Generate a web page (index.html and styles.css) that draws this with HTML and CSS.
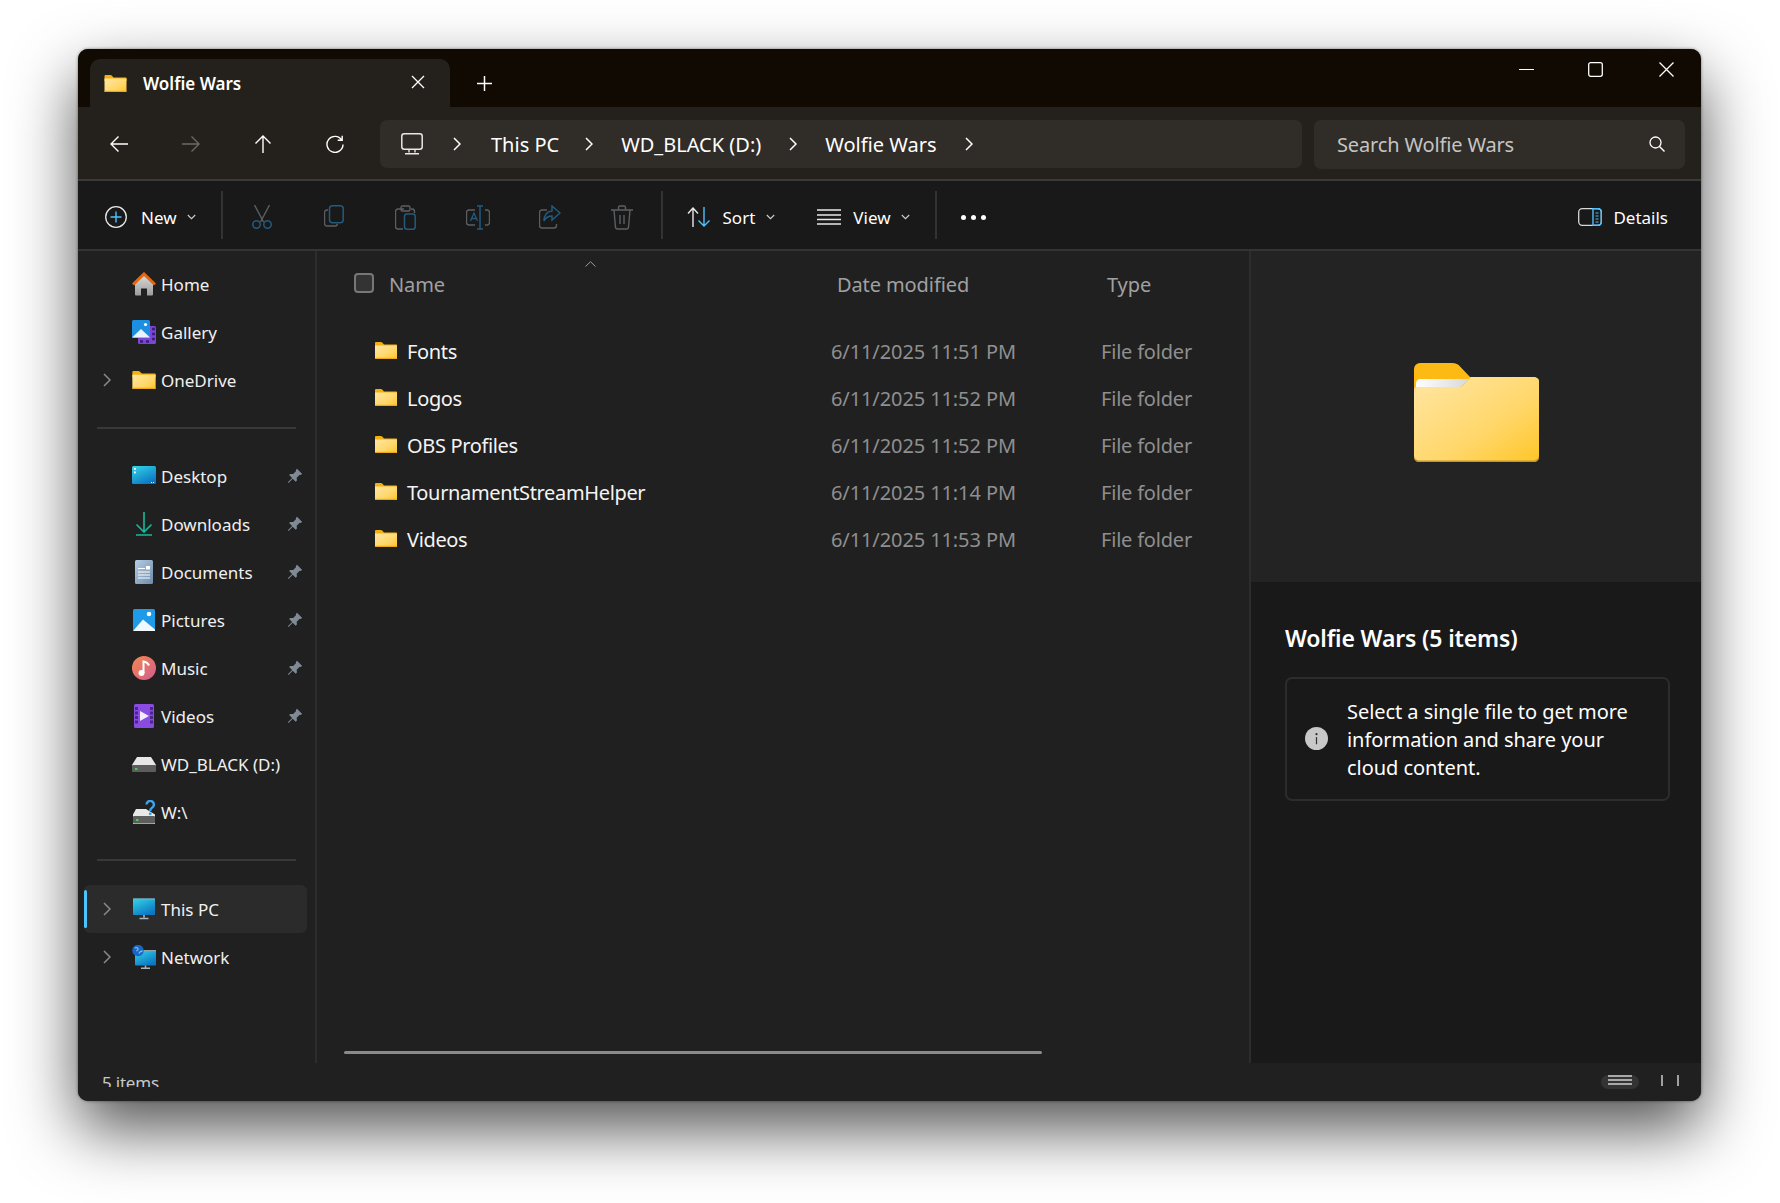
FILE: index.html
```html
<!DOCTYPE html>
<html lang="en">
<head>
    <meta charset="UTF-8">
    <title>Wolfie Wars - File Explorer</title>
    <link rel="stylesheet" href="styles.css">
</head>
<body>

    <!-- Shared icons -->
    <svg class="defs" width="0" height="0">
        <defs>
            <linearGradient id="folderFront" x1="0" y1="0" x2="1" y2="1">
                <stop offset="0" stop-color="#ffe6a3"/>
                <stop offset="0.6" stop-color="#ffd76a"/>
                <stop offset="1" stop-color="#ffc629"/>
            </linearGradient>
            <linearGradient id="paper" x1="0" y1="0" x2="1" y2="0">
                <stop offset="0" stop-color="#ffffff"/>
                <stop offset="1" stop-color="#d8d8d8"/>
            </linearGradient>
            <linearGradient id="screenBlue" x1="0" y1="0" x2="0.6" y2="1">
                <stop offset="0" stop-color="#35d6e8"/>
                <stop offset="1" stop-color="#0c78c4"/>
            </linearGradient>
            <linearGradient id="musicGrad" x1="0" y1="0" x2="1" y2="1">
                <stop offset="0" stop-color="#f5884a"/>
                <stop offset="1" stop-color="#d05c94"/>
            </linearGradient>
            <linearGradient id="docGrad" x1="0" y1="0" x2="1" y2="1">
                <stop offset="0" stop-color="#b4cde6"/>
                <stop offset="1" stop-color="#6f8ba8"/>
            </linearGradient>
            <linearGradient id="houseGrad" x1="0" y1="0" x2="0" y2="1">
                <stop offset="0" stop-color="#d8d8d8"/>
                <stop offset="1" stop-color="#9c9c9c"/>
            </linearGradient>
            <symbol id="folder" viewBox="0 0 22 17">
                <path d="M0 1.2C0 .5.5 0 1.2 0h4.6c.6 0 1 .2 1.4.6L9 2.4h12c.6 0 1 .4 1 1V6H0z" fill="#f5b00f"/>
                <path d="M0 3.6h22v12.6c0 .5-.3.8-.8.8H.8c-.5 0-.8-.3-.8-.8z" fill="url(#folderFront)"/>
                <rect x="0" y="15.8" width="22" height="1.2" fill="#eca91b"/>
            </symbol>
            <symbol id="pin" viewBox="0 0 16 16">
                <path d="M10 .8l5.2 5.2-1.5 1-1-.3-3 3 .2 2.8-1.2 1.2-3-3L1.6 15 .9 14.3l4.2-4.2-3-3 1.2-1.2 2.8.2 3-3-.3-1z" fill="#7f8a94"/>
            </symbol>
            <symbol id="chev" viewBox="0 0 8 14">
                <path d="M1 1l6 6-6 6" fill="none" stroke="currentColor" stroke-width="1.5"/>
            </symbol>
            <symbol id="drop" viewBox="0 0 9 6">
                <path d="M.8 1l3.7 3.7L8.2 1" fill="none" stroke="currentColor" stroke-width="1.1"/>
            </symbol>
            <symbol id="drive" viewBox="0 0 24 16">
                <path d="M5 1h14l5 8v6H0V9z" fill="#e8e8e8"/>
                <rect x="0" y="9" width="24" height="7" rx="1" fill="#5d5d5d"/>
                <rect x="3" y="12" width="2.4" height="2" fill="#3fd54a"/>
            </symbol>
        </defs>
    </svg>

    <div class="window">

        <!-- Title bar with tab -->
        <div class="titlebar">
            <div class="tab">
                <svg class="tab-folder"><use href="#folder"/></svg>
                <span class="tab-title">Wolfie Wars</span>
                <svg class="tab-close" viewBox="0 0 14 14"><path d="M1 1l12 12M13 1L1 13" stroke="#fff" stroke-width="1.3"/></svg>
            </div>
            <svg class="tab-new" viewBox="0 0 15 15"><path d="M7.5 0v15M0 7.5h15" stroke="#fff" stroke-width="1.5"/></svg>
            <div class="win-controls">
                <svg class="win-min" viewBox="0 0 15 15"><path d="M0 7.5h15" stroke="#fff" stroke-width="1.2"/></svg>
                <svg class="win-max" viewBox="0 0 15 15"><rect x=".7" y=".7" width="13.6" height="13.6" rx="2" fill="none" stroke="#fff" stroke-width="1.3"/></svg>
                <svg class="win-close" viewBox="0 0 15 15"><path d="M.5.5l14 14M14.5.5l-14 14" stroke="#fff" stroke-width="1.3"/></svg>
            </div>
        </div>

        <!-- Address row -->
        <div class="navrow">
            <div class="nav-btn"><svg viewBox="0 0 18 18"><path d="M18 9H1M8.5 1.5L1 9l7.5 7.5" fill="none" stroke="#fff" stroke-width="1.4"/></svg></div>
            <div class="nav-btn"><svg viewBox="0 0 18 18"><path d="M0 9h17M9.5 1.5L17 9l-7.5 7.5" fill="none" stroke="#6b6966" stroke-width="1.4"/></svg></div>
            <div class="nav-btn"><svg viewBox="0 0 18 18"><path d="M9 18V1M1.5 8.5L9 1l7.5 7.5" fill="none" stroke="#fff" stroke-width="1.4"/></svg></div>
            <div class="nav-btn"><svg viewBox="0 0 18 18"><path d="M15.7 5A8 8 0 1 0 17 9.5M16.2 .8V5.3H11.7" fill="none" stroke="#fff" stroke-width="1.4"/></svg></div>
            <div class="addressbar">
                <svg class="addr-pc" viewBox="0 0 22 22"><rect x=".8" y=".8" width="20.4" height="15.4" rx="2.5" fill="none" stroke="#e8e8e8" stroke-width="1.5"/><path d="M8 16.5v3M14 16.5v3M4 20.7h14" stroke="#e8e8e8" stroke-width="1.4" fill="none"/></svg>
                <svg class="crumb-chev first"><use href="#chev"/></svg>
                <span class="crumb crumb-pc">This PC</span>
                <svg class="crumb-chev"><use href="#chev"/></svg>
                <span class="crumb crumb-wd">WD_BLACK (D:)</span>
                <svg class="crumb-chev"><use href="#chev"/></svg>
                <span class="crumb crumb-ww">Wolfie Wars</span>
                <svg class="crumb-chev"><use href="#chev"/></svg>
            </div>
            <div class="searchbox">
                <span>Search Wolfie Wars</span>
                <svg viewBox="0 0 16 16"><circle cx="6.5" cy="6.5" r="5.5" fill="none" stroke="#fff" stroke-width="1.3"/><path d="M10.5 10.5L15.5 15.5" stroke="#fff" stroke-width="1.4"/></svg>
            </div>
        </div>

        <!-- Command bar -->
        <div class="toolbar">
            <div class="tool-new">
                <svg class="ic-new" viewBox="0 0 22 22"><circle cx="11" cy="11" r="10.3" fill="none" stroke="#e8e8e8" stroke-width="1.3"/><path d="M11 5.5v11M5.5 11h11" stroke="#4cc2ff" stroke-width="1.4"/></svg>
                <span class="tool-label">New</span>
                <svg class="tool-drop"><use href="#drop"/></svg>
            </div>
            <div class="tool-sep sep-a"></div>
            <div class="tool-icons">
                <div class="tool-icon"><svg width="20" height="24" viewBox="0 0 20 24"><path d="M2.5 0l9 17M17.5 0l-9 17" stroke="#5c5f62" stroke-width="1.4"/><circle cx="4.5" cy="19.5" r="3.7" fill="none" stroke="#245a7d" stroke-width="1.5"/><circle cx="15.5" cy="19.5" r="3.7" fill="none" stroke="#245a7d" stroke-width="1.5"/></svg></div>
                <div class="tool-icon"><svg width="20" height="22" viewBox="0 0 20 22"><path d="M4 5H3a2.5 2.5 0 0 0-2.5 2.5v11A2.5 2.5 0 0 0 3 21h8a2.5 2.5 0 0 0 2.5-2" fill="none" stroke="#5c5f62" stroke-width="1.4"/><rect x="5.5" y=".8" width="13.7" height="17" rx="3" fill="none" stroke="#245a7d" stroke-width="1.5"/></svg></div>
                <div class="tool-icon"><svg width="21" height="25" viewBox="0 0 21 25"><path d="M9 4H3a2.5 2.5 0 0 0-2.5 2.5v15A2.5 2.5 0 0 0 3 24h5M16 4h1a2.5 2.5 0 0 1 2.5 2.5V8" fill="none" stroke="#5c5f62" stroke-width="1.4"/><rect x="6" y="1" width="9" height="5" rx="1.5" fill="none" stroke="#5c5f62" stroke-width="1.4"/><rect x="9.5" y="9" width="10.7" height="15.2" rx="2.5" fill="none" stroke="#245a7d" stroke-width="1.5"/></svg></div>
                <div class="tool-icon"><svg width="24" height="25" viewBox="0 0 24 25"><path d="M9 5H3a2.5 2.5 0 0 0-2.5 2.5v10A2.5 2.5 0 0 0 3 20h6M19 5h2a2.5 2.5 0 0 1 2.5 2.5v10A2.5 2.5 0 0 1 21 20h-2" fill="none" stroke="#5c5f62" stroke-width="1.4"/><path d="M14 1v23M11 1h6M11 24h6" stroke="#245a7d" stroke-width="1.5"/><path d="M4.5 16l3.5-8 3.5 8M5.8 13.5h4.5" fill="none" stroke="#245a7d" stroke-width="1.3"/></svg></div>
                <div class="tool-icon"><svg width="22" height="24" viewBox="0 0 22 24"><path d="M8 5H3a2.5 2.5 0 0 0-2.5 2.5v13A2.5 2.5 0 0 0 3 23h12a2.5 2.5 0 0 0 2.5-2.5V19" fill="none" stroke="#5c5f62" stroke-width="1.4"/><path d="M13 1l8 7-8 7v-4c-4 0-6 1-8 5 0-6 3-9.5 8-10z" fill="none" stroke="#245a7d" stroke-width="1.5"/></svg></div>
                <div class="tool-icon"><svg width="22" height="25" viewBox="0 0 22 25"><path d="M0 5h22M7.5 5V2.5A1.5 1.5 0 0 1 9 1h4a1.5 1.5 0 0 1 1.5 1.5V5M3 5l1.5 17.5A2 2 0 0 0 6.5 24h9a2 2 0 0 0 2-1.5L19 5M9 10v9M13 10v9" fill="none" stroke="#5c5f62" stroke-width="1.4"/></svg></div>
            </div>
            <div class="tool-sep sep-b"></div>
            <div class="tool-sort">
                <svg class="ic-sort" viewBox="0 0 24 20"><path d="M6 20V1M1 6.5L6 1l5 5.5" fill="none" stroke="#e8e8e8" stroke-width="1.4"/><path d="M17 0v19M11.5 13.5L17 19l5.5-5.5" fill="none" stroke="#4cc2ff" stroke-width="1.4"/></svg>
                <span class="tool-label">Sort</span>
                <svg class="tool-drop"><use href="#drop"/></svg>
            </div>
            <div class="tool-view">
                <svg class="ic-view" viewBox="0 0 24 16"><path d="M0 1h24M0 6h24M0 10.5h24M0 15h24" stroke="#e8e8e8" stroke-width="1.3"/></svg>
                <span class="tool-label">View</span>
                <svg class="tool-drop"><use href="#drop"/></svg>
            </div>
            <div class="tool-sep sep-c"></div>
            <div class="tool-more"><i></i><i></i><i></i></div>
            <div class="tool-details">
                <svg class="ic-details" viewBox="0 0 24 18"><rect x=".7" y=".7" width="22.6" height="16.6" rx="3.5" fill="none" stroke="#d8d8d8" stroke-width="1.3"/><path d="M15 .7h5a3.3 3.3 0 0 1 3.3 3.3v10a3.3 3.3 0 0 1-3.3 3.3h-5z" fill="none" stroke="#4cc2ff" stroke-width="1.4"/><path d="M17.5 5h3M17.5 8h3M17.5 11h3M17.5 14h3" stroke="#4cc2ff" stroke-width="1"/></svg>
                <span class="tool-label">Details</span>
            </div>
        </div>

        <div class="content">

            <!-- Navigation pane -->
            <div class="sidebar">
                <div class="side-row">
                    <span class="side-chev"></span>
                    <svg class="side-icon" viewBox="0 0 24 24"><path d="M3 12L12 3.5 21 12v10.5a1 1 0 0 1-1 1h-5v-7H9v7H4a1 1 0 0 1-1-1z" fill="url(#houseGrad)"/><path d="M1 12.5L12 2l11 10.5" fill="none" stroke="#e8660c" stroke-width="3"/></svg>
                    <span>Home</span>
                </div>
                <div class="side-row">
                    <span class="side-chev"></span>
                    <svg class="side-icon" viewBox="0 0 24 24"><rect x="6" y="6" width="18" height="18" rx="1.5" fill="#7c45d6"/><path d="M20 9h3M20 14h3M20 19h3M8 21.5h3M14 21.5h3" stroke="#3a1f78" stroke-width="2.4"/><rect x="0" y="0" width="18" height="18" rx="1.5" fill="#1d8fe0"/><path d="M0 17.5L9 9l9 8.5z" fill="#e8f4ff"/><circle cx="13.5" cy="4.5" r="1.6" fill="#fff"/></svg>
                    <span>Gallery</span>
                </div>
                <div class="side-row">
                    <svg class="side-chev"><use href="#chev"/></svg>
                    <svg class="side-icon side-folder"><use href="#folder"/></svg>
                    <span>OneDrive</span>
                </div>

                <div class="side-sep"></div>

                <div class="side-row">
                    <span class="side-chev"></span>
                    <svg class="side-icon" viewBox="0 0 24 24"><rect x="0" y="2" width="24" height="18" rx="1.5" fill="url(#screenBlue)"/><rect x="2" y="4" width="1.8" height="1.8" fill="#fff"/><rect x="2" y="7.5" width="1.8" height="1.8" fill="#fff"/><rect x="19" y="18" width="1" height="1" fill="#fff"/><rect x="21" y="18" width="1" height="1" fill="#fff"/></svg>
                    <span>Desktop</span>
                    <svg class="side-pin"><use href="#pin"/></svg>
                </div>
                <div class="side-row">
                    <span class="side-chev"></span>
                    <svg class="side-icon" viewBox="0 0 24 24"><path d="M12 0v20M4.5 12.5L12 20l7.5-7.5M4 23h16" fill="none" stroke="#18b99a" stroke-width="1.6"/></svg>
                    <span>Downloads</span>
                    <svg class="side-pin"><use href="#pin"/></svg>
                </div>
                <div class="side-row">
                    <span class="side-chev"></span>
                    <svg class="side-icon" viewBox="0 0 24 24"><rect x="3" y="0" width="18" height="24" rx="1.5" fill="url(#docGrad)"/><path d="M6 8.5h7M6 12h12M6 15h12M6 18h12" stroke="#fff" stroke-width="1.2"/><rect x="14" y="6" width="4" height="3.5" fill="#fff"/></svg>
                    <span>Documents</span>
                    <svg class="side-pin"><use href="#pin"/></svg>
                </div>
                <div class="side-row">
                    <span class="side-chev"></span>
                    <svg class="side-icon" viewBox="0 0 24 24"><rect x="1" y="1" width="22" height="22" rx="1.5" fill="#1d9ae8"/><path d="M1 23L11 11.5 23 21.5V23z" fill="#f2f8ff"/><circle cx="17" cy="6" r="2.3" fill="#fff"/></svg>
                    <span>Pictures</span>
                    <svg class="side-pin"><use href="#pin"/></svg>
                </div>
                <div class="side-row">
                    <span class="side-chev"></span>
                    <svg class="side-icon" viewBox="0 0 24 24"><circle cx="12" cy="12" r="12" fill="url(#musicGrad)"/><circle cx="9.5" cy="17" r="3" fill="#fff"/><path d="M11.5 17V5.5c2.5.3 4.5 1.6 5.5 4" fill="none" stroke="#fff" stroke-width="2"/></svg>
                    <span>Music</span>
                    <svg class="side-pin"><use href="#pin"/></svg>
                </div>
                <div class="side-row">
                    <span class="side-chev"></span>
                    <svg class="side-icon" viewBox="0 0 24 24"><rect x="2" y="0" width="20" height="24" rx="1.5" fill="#8a4be0"/><path d="M4.5 3v18M19.5 3v18" stroke="#4a2590" stroke-width="3" stroke-dasharray="3 1.5"/><path d="M8 7l9 5-9 5z" fill="#f3ecff"/></svg>
                    <span>Videos</span>
                    <svg class="side-pin"><use href="#pin"/></svg>
                </div>
                <div class="side-row">
                    <span class="side-chev"></span>
                    <svg class="side-icon side-drive"><use href="#drive"/></svg>
                    <span>WD_BLACK (D:)</span>
                </div>
                <div class="side-row">
                    <span class="side-chev"></span>
                    <svg class="side-icon" viewBox="0 0 24 24"><path d="M4 9h10l9 5.5V24H1v-9.5z" fill="#e8e8e8"/><rect x="1" y="16" width="22" height="7.5" rx="1" fill="#5d5d5d"/><rect x="4" y="19" width="2.4" height="2" fill="#3fd54a"/><path d="M14.5 4.5a3.7 3.7 0 1 1 5.5 3.3c-1.4.8-1.8 1.5-1.8 3.2" fill="none" stroke="#3ba4ec" stroke-width="2.4"/><circle cx="18.2" cy="13.8" r="1.5" fill="#3ba4ec"/></svg>
                    <span>W:\</span>
                </div>

                <div class="side-sep sep-pc"></div>

                <div class="side-row selected">
                    <svg class="side-chev"><use href="#chev"/></svg>
                    <svg class="side-icon" viewBox="0 0 24 24"><rect x="1" y="1.5" width="22" height="16.5" rx="1" fill="url(#screenBlue)"/><rect x="1" y="1.5" width="22" height="1.3" fill="#8fa3ad"/><path d="M12 18v2.5M7.5 21.5h9" stroke="#a8b4bc" stroke-width="1.6"/></svg>
                    <span>This PC</span>
                </div>
                <div class="side-row">
                    <svg class="side-chev"><use href="#chev"/></svg>
                    <svg class="side-icon" viewBox="0 0 24 24"><rect x="3" y="5" width="21" height="15.5" rx="1" fill="url(#screenBlue)"/><rect x="3" y="5" width="21" height="1.3" fill="#8fa3ad"/><path d="M13.5 20.5V23M9 23.3h9" stroke="#a8b4bc" stroke-width="1.5"/><circle cx="6" cy="5.5" r="5.7" fill="#1667c4"/><path d="M2.5 3c1.5-.8 3-.5 3.5.8.4 1.2-1 1.5-1.5 2.5M7 8.5c.6-1.5 2-2.5 3.5-2.5" fill="none" stroke="#7db9f0" stroke-width="1.3"/></svg>
                    <span>Network</span>
                </div>
            </div>

            <!-- File list -->
            <div class="filelist">
                <div class="list-head">
                    <span class="check"></span>
                    <span class="col-name">Name</span>
                    <svg class="sort-caret" viewBox="0 0 11 6"><path d="M.5 5.5L5.5.7l5 4.8" fill="none" stroke="#9a9a9a" stroke-width="1"/></svg>
                    <span class="col-date">Date modified</span>
                    <span class="col-type">Type</span>
                </div>
                <div class="file-row">
                    <svg class="file-icon"><use href="#folder"/></svg>
                    <span class="file-name">Fonts</span>
                    <span class="file-date">6/11/2025 11:51 PM</span>
                    <span class="file-type">File folder</span>
                </div>
                <div class="file-row">
                    <svg class="file-icon"><use href="#folder"/></svg>
                    <span class="file-name">Logos</span>
                    <span class="file-date">6/11/2025 11:52 PM</span>
                    <span class="file-type">File folder</span>
                </div>
                <div class="file-row">
                    <svg class="file-icon"><use href="#folder"/></svg>
                    <span class="file-name">OBS Profiles</span>
                    <span class="file-date">6/11/2025 11:52 PM</span>
                    <span class="file-type">File folder</span>
                </div>
                <div class="file-row">
                    <svg class="file-icon"><use href="#folder"/></svg>
                    <span class="file-name">TournamentStreamHelper</span>
                    <span class="file-date">6/11/2025 11:14 PM</span>
                    <span class="file-type">File folder</span>
                </div>
                <div class="file-row">
                    <svg class="file-icon"><use href="#folder"/></svg>
                    <span class="file-name">Videos</span>
                    <span class="file-date">6/11/2025 11:53 PM</span>
                    <span class="file-type">File folder</span>
                </div>
                <div class="hscroll"></div>
            </div>

            <!-- Details pane -->
            <div class="details">
                <div class="preview">
                    <svg class="big-folder" viewBox="0 0 125 99">
                        <path d="M0 6a6 6 0 0 1 6-6h32c4 0 6 1 8.5 4L56 14h63a6 6 0 0 1 6 6v20H0z" fill="#fdb914"/>
                        <path d="M2 20c0-2 2-4 4-4h49l-5 5c-1.5 1.5-3 3-5 3H2z" fill="url(#paper)"/>
                        <path d="M0 27c0-2 1-3 3-3h41c2.5 0 4-.6 5.5-2L57 14h62c4 0 6 2 6 4v75c0 4-2 6-6 6H6c-4 0-6-2-6-6z" fill="url(#folderFront)"/>
                        <path d="M0 93c0 4 2 6 6 6h113c4 0 6-2 6-6v-1c0 3-2 5.5-6 5.5H6c-4 0-6-2.5-6-5.5z" fill="#c4952a"/>
                    </svg>
                </div>
                <div class="info">
                    <div class="info-title">Wolfie Wars (5 items)</div>
                    <div class="info-box">
                        <svg class="info-icon" viewBox="0 0 24 24"><circle cx="12" cy="12" r="12" fill="#c8c8c8"/><circle cx="12" cy="7.5" r="1.2" fill="#333"/><path d="M12 10.5V18" stroke="#333" stroke-width="1.3"/></svg>
                        <p>Select a single file to get more information and share your cloud content.</p>
                    </div>
                </div>
            </div>
        </div>

        <!-- Status bar -->
        <div class="statusbar">
            <div class="status-clip"><span>5 items</span></div>
            <div class="view-pill"><i></i><i></i><i></i></div>
            <div class="view-tick"></div>
            <div class="view-tick"></div>
        </div>
    </div>

</body>
</html>
```

FILE: styles.css
```css
body {
    margin: 0;
    background: #fff;
    font-family: "Noto Sans", "Open Sans", sans-serif;
    color: #fff;
    height: 1203px;
    overflow: hidden;
}
svg { display: block; flex-shrink: 0; }
.defs { position: absolute; }
.window {
    margin: 49px 0 0 78px;
    width: 1623px;
    height: 1052px;
    display: flex;
    flex-direction: column;
    border-radius: 10px;
    overflow: hidden;
    background: #202020;
    box-shadow: 0 0 3px rgba(0, 0, 0, 0.5), 0 28px 64px rgba(0, 0, 0, 0.68);
}

/* Title bar */
.titlebar {
    height: 58px;
    background: #100a02;
    display: flex;
    align-items: flex-end;
    flex-shrink: 0;
}
.tab {
    width: 360px;
    height: 48px;
    margin-left: 12px;
    background: #24211c;
    border-radius: 10px 10px 0 0;
    display: flex;
    align-items: center;
}
.tab-folder { width: 23px; height: 17px; margin-left: 14px; }
.tab-title { margin-left: 16px; font-size: 17px; font-weight: 600; width: 268px; }
.tab-close { width: 14px; height: 14px; margin-top: -2px; }
.tab-new { width: 15px; height: 15px; margin: 0 0 16px 27px; }
.win-controls {
    margin-left: auto;
    align-self: flex-start;
    display: flex;
    padding: 13px 27px 0 0;
}
.win-min, .win-max, .win-close { width: 15px; height: 15px; }
.win-max { margin-left: 54px; }
.win-close { margin-left: 56px; }

/* Address row */
.navrow {
    height: 70px;
    padding: 2px 0 0 5px;
    background: #24201b;
    display: flex;
    align-items: center;
    border-bottom: 2px solid #3a3a3a;
    flex-shrink: 0;
}
.nav-btn { width: 72px; display: flex; justify-content: center; }
.nav-btn svg { width: 18px; height: 18px; }
.addressbar {
    margin-left: 9px;
    width: 922px;
    height: 48px;
    background: #302c28;
    border-radius: 7px;
    display: flex;
    align-items: center;
    color: #fff;
}
.addr-pc { width: 22px; height: 22px; margin-left: 21px; }
.crumb-chev { width: 8px; height: 14px; }
.crumb-chev.first { margin-left: 30px; }
.crumb { font-size: 20px; letter-spacing: 0; }
.crumb-pc { margin: 0 26px 0 30px; }
.crumb-wd { margin: 0 28px; }
.crumb-ww { margin: 0 28px; }
.searchbox {
    margin-left: 12px;
    width: 371px;
    height: 49px;
    background: #302c28;
    border-radius: 7px;
    display: flex;
    align-items: center;
    justify-content: space-between;
    padding: 0 20px 0 23px;
    box-sizing: border-box;
    font-size: 20px;
    letter-spacing: -0.15px;
    color: #c4c4c4;
}
.searchbox svg { width: 16px; height: 16px; }

/* Command bar */
.toolbar {
    height: 64px;
    padding-top: 4px;
    background: #191919;
    border-bottom: 2px solid #343434;
    display: flex;
    align-items: center;
    flex-shrink: 0;
}
.tool-label { font-size: 17px; letter-spacing: 0; color: #fff; }
.tool-drop { width: 9px; height: 6px; color: #cfcfcf; }
.tool-new { display: flex; align-items: center; margin-left: 27px; }
.ic-new { width: 22px; height: 22px; margin-right: 14px; }
.tool-new .tool-drop { margin-left: 10px; }
.tool-sep { width: 2px; height: 48px; background: #333; margin-top: -4px; }
.sep-a { margin-left: 25px; }
.tool-icons { display: flex; margin-left: 3px; }
.tool-icon { width: 72px; display: flex; justify-content: center; }
.sep-b { margin-left: 3px; }
.tool-sort { display: flex; align-items: center; margin-left: 24px; }
.ic-sort { width: 24px; height: 20px; margin-right: 12px; }
.tool-sort .tool-drop { margin-left: 11px; }
.tool-view { display: flex; align-items: center; margin-left: 42px; }
.ic-view { width: 24px; height: 16px; margin-right: 12px; }
.tool-view .tool-drop { margin-left: 10px; }
.sep-c { margin-left: 25px; }
.tool-more { display: flex; gap: 5px; margin-left: 24px; }
.tool-more i { width: 5px; height: 5px; border-radius: 50%; background: #fff; }
.tool-details { display: flex; align-items: center; margin-left: auto; padding-right: 33px; }
.ic-details { width: 24px; height: 18px; margin-right: 11px; }

/* Main area */
.content {
    height: 812px;
    display: flex;
    flex-shrink: 0;
}
.sidebar {
    width: 237px;
    padding-top: 9px;
    border-right: 2px solid #2d2d2d;
    flex-shrink: 0;
    font-size: 17px;
    letter-spacing: 0;
    color: #f0f0f0;
}
.side-row {
    height: 48px;
    width: 223px;
    margin-left: 6px;
    padding: 0 4px 0 19px;
    box-sizing: border-box;
    display: flex;
    align-items: center;
    border-radius: 6px;
    position: relative;
}
.side-chev { width: 8px; height: 14px; margin-right: 21px; color: #8a8a8a; flex-shrink: 0; }
.side-icon { width: 24px; height: 24px; margin-right: 5px; }
.side-folder { height: 18px; }
.side-drive { height: 16px; }
.side-pin { width: 16px; height: 16px; margin-left: auto; }
.side-sep { height: 2px; width: 199px; margin: 23px 0 23px 19px; background: #383838; }
.sep-pc { margin: 23px 0 24px 19px; }
.selected { background: #2b2b2b; }
.selected::before {
    content: "";
    position: absolute;
    left: 0;
    top: 5px;
    width: 3px;
    height: 38px;
    border-radius: 2px;
    background: #4cc2ff;
}

/* File list */
.filelist {
    flex: 1;
    padding-top: 9px;
    position: relative;
    font-size: 20px;
    letter-spacing: -0.4px;
}
.list-head {
    height: 48px;
    display: flex;
    align-items: center;
    color: #a0a0a0;
    letter-spacing: -0.1px;
}
.check {
    width: 20px;
    height: 20px;
    margin: -2px 0 0 37px;
    border: 2px solid #777;
    border-radius: 4px;
    background: #333;
    box-sizing: border-box;
    flex-shrink: 0;
}
.col-name { margin-left: 15px; width: 196px; }
.sort-caret { width: 11px; height: 6px; margin-top: -41px; }
.col-date { margin-left: 241px; width: 270px; }
.file-row {
    height: 47px;
    display: flex;
    align-items: center;
}
.list-head + .file-row { margin-top: 20px; }
.file-icon { width: 22px; height: 17px; margin-left: 58px; margin-top: -3px; }
.file-name { width: 424px; margin-left: 10px; color: #f4f4f4; letter-spacing: -0.35px; }
.file-date { width: 270px; color: #8f8f8f; letter-spacing: -0.1px; }
.file-type { color: #8f8f8f; letter-spacing: -0.2px; }
.hscroll {
    position: absolute;
    left: 27px;
    top: 800px;
    width: 698px;
    height: 3px;
    border-radius: 2px;
    background: #8a8a8a;
}

/* Details pane */
.details {
    width: 450px;
    flex-shrink: 0;
    border-left: 2px solid #2d2d2d;
    display: flex;
    flex-direction: column;
}
.preview {
    height: 331px;
    background: #232323;
    display: flex;
    justify-content: center;
    padding-top: 112px;
    box-sizing: border-box;
}
.big-folder { width: 125px; height: 99px; }
.info { flex: 1; background: #191919; padding: 40px 31px 0 34px; }
.info-title { font-size: 23px; font-weight: 600; letter-spacing: -0.15px; line-height: 32px; }
.info-box {
    margin-top: 23px;
    height: 124px;
    border: 2px solid #2c2c2c;
    border-radius: 7px;
    box-sizing: border-box;
    display: flex;
    align-items: center;
    padding-left: 18px;
}
.info-icon { width: 23px; height: 23px; margin-top: -2px; }
.info-box p {
    margin: 2px 0 0 19px;
    font-size: 20px;
    line-height: 28px;
    letter-spacing: -0.05px;
    width: 310px;
}

/* Status bar */
.statusbar {
    flex: 1;
    background: #202020;
    display: flex;
    align-items: flex-start;
    padding-top: 12px;
}
.status-clip {
    height: 12px;
    overflow: hidden;
    margin-left: 24px;
    font-size: 17px;
    line-height: 16px;
    color: #c8c8c8;
    letter-spacing: -0.2px;
}
.view-pill {
    margin-left: auto;
    width: 38px;
    height: 14px;
    background: #333;
    border-radius: 7px;
    display: flex;
    flex-direction: column;
    gap: 2px;
    align-items: center;
}
.view-pill i { width: 24px; height: 2px; background: #a8a8a8; }
.view-tick { width: 2px; height: 11px; background: #a0a0a0; }
.view-pill + .view-tick { margin-left: 22px; }
.view-tick + .view-tick { margin: 0 22px 0 14px; }
```
